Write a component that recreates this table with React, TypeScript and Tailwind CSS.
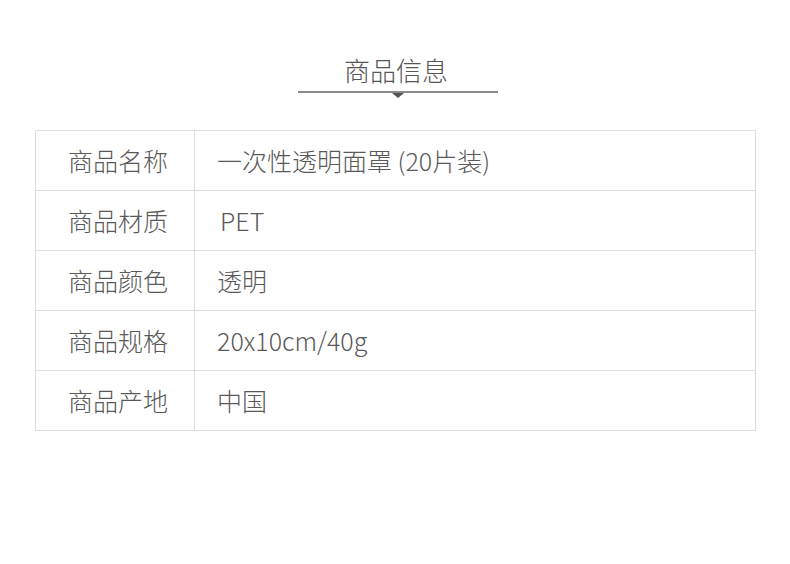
const rows = [
  { label: "商品名称", value: "一次性透明面罩 (20片装)" },
  { label: "商品材质", value: "PET", pad: true },
  { label: "商品颜色", value: "透明" },
  { label: "商品规格", value: "20x10cm/40g" },
  { label: "商品产地", value: "中国" },
];

export default function App() {
  return (
    <div
      className="w-[790px] h-[564px] bg-white text-[#595959] px-[35px] pt-[53px]"
      style={{ fontFamily: '"Noto Sans CJK SC", "Noto Sans", sans-serif' }}
    >
      {/* heading */}
      <div className="flex flex-col items-center">
        <h2 className="text-[26px] leading-[34px] font-light text-[#555] ml-[2px]">商品信息</h2>
        <div className="relative mt-[4px] w-[200px] h-[2px] bg-[#8a8a8a] ml-[5px]">
          <div className="absolute left-1/2 top-[2px] -translate-x-1/2 w-0 h-0 border-l-[6px] border-r-[6px] border-t-[5px] border-l-transparent border-r-transparent border-t-[#555]" />
        </div>
      </div>

      {/* spec table */}
      <div className="mt-[37px] w-[721px] border border-[#dcdcdc]">
        {rows.map((r, i) => (
          <div
            key={r.label}
            className={`flex ${i > 0 ? "h-[60px] border-t border-[#dcdcdc]" : "h-[59px]"}`}
          >
            <div className="w-[159px] shrink-0 border-r border-[#dcdcdc] flex items-center pl-[32px] text-[25px] font-light">
              {r.label}
            </div>
            <div className={`flex items-center text-[25px] font-light whitespace-pre ${r.pad ? "pl-[25px]" : "pl-[22px]"}`}>
              {r.value}
            </div>
          </div>
        ))}
      </div>
    </div>
  );
}
